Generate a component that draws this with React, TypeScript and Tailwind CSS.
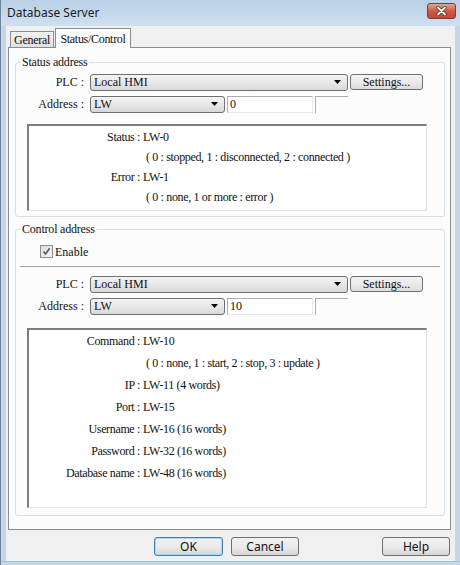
import React from "react";

const serif = { fontFamily: '"Liberation Serif", "DejaVu Serif", serif' };
const sans = { fontFamily: '"Noto Sans", "Open Sans", "Liberation Sans", sans-serif' };

function DropArrow() {
  return (
    <svg width="7" height="4" viewBox="0 0 7 4" className="shrink-0">
      <polygon points="0,0 7,0 3.5,4" fill="#000" />
    </svg>
  );
}

function Combo({ value, width }: { value: string; width: string }) {
  return (
    <div
      className={`${width} h-[17px] flex items-center justify-between pl-[3px] pr-[6px] rounded-[3px] border border-[#707070] bg-gradient-to-b from-[#f3f3f3] via-[#e8e8e8] to-[#d8d8d8] text-[12px]`}
    >
      <span>{value}</span>
      <DropArrow />
    </div>
  );
}

function Field({ value }: { value: string }) {
  return (
    <div className="w-[86px] h-[17px] flex items-center pl-[2px] ml-[2px] bg-white border border-[#abadb3] border-r-[#e3e9ef] border-b-[#e3e9ef] text-[12px]">
      {value}
    </div>
  );
}

function AddressRows({ station }: { station: string }) {
  return (
    <div className="flex flex-col gap-[4px]">
      <div className="flex items-center">
        <div className="w-[68px] text-right text-[12px] mr-[6px]">PLC :</div>
        <Combo value="Local HMI" width="w-[258px]" />
        <div className="ml-[2px] w-[73px] h-[16px] flex items-center justify-center rounded-[3px] border border-[#707070] bg-gradient-to-b from-[#f3f3f3] via-[#ebebeb] to-[#dcdcdc] text-[12px]">
          Settings...
        </div>
      </div>
      <div className="flex items-center">
        <div className="w-[68px] text-right text-[12px] mr-[6px]">Address :</div>
        <Combo value="LW" width="w-[135px]" />
        <Field value={station} />
        <div className="ml-[2px] w-[33px] h-[17px] border-l border-t border-[#abadb3]" />
      </div>
    </div>
  );
}

type Line = { label?: string; value: string };

function InfoBox({ lines, height, rowHeight, firstTop }: { lines: Line[]; height: string; rowHeight: string; firstTop: string }) {
  return (
    <div
      className={`ml-[11px] w-[400px] ${height} bg-white border-l-2 border-t-2 border-r border-b border-l-[#7d7d7d] border-t-[#7d7d7d] border-r-[#e4e4e4] border-b-[#e4e4e4] ${firstTop} text-[12px] tracking-[-0.35px]`}
    >
      {lines.map((l, i) => (
        <div key={i} className={`flex items-center ${rowHeight}`}>
          {l.label !== undefined ? (
            <>
              <div className="w-[111px] text-right whitespace-nowrap">{l.label} :</div>
              <div className="ml-[3px] whitespace-nowrap">{l.value}</div>
            </>
          ) : (
            <div className="ml-[117px] whitespace-nowrap">{l.value}</div>
          )}
        </div>
      ))}
    </div>
  );
}

function GroupBox({ title, className, children }: { title: string; className: string; children: React.ReactNode }) {
  return (
    <fieldset className={`mx-[5px] ml-[6px] border border-[#d5dfe5] rounded-[3px] ${className}`}>
      <legend className="ml-[5px] px-[1px] text-[12px] leading-[14px] tracking-[-0.2px]">{title}</legend>
      {children}
    </fieldset>
  );
}

export default function App() {
  return (
    <div className="w-[460px] h-[565px] flex flex-col bg-[#c3d6ea] border-l border-[#6f8299] text-[#111]" style={serif}>
      {/* title bar */}
      <div className="h-[26px] shrink-0 flex items-center justify-between pl-[6px] pr-[4px] bg-gradient-to-b from-[#b9d0e8] to-[#cfdff0]">
        <span className="text-[12px] text-[#1b1b1b] -mt-[1px]" style={sans}>
          Database Server
        </span>
        <div className="w-[29px] h-[16px] -mt-[4px] rounded-[3px] border border-[#7d3a32] bg-gradient-to-b from-[#e2a493] via-[#cc5a45] to-[#c04a36] flex items-center justify-center">
          <svg width="11" height="10" viewBox="0 0 11 10">
            <path d="M2 1.5 L9 8.5 M9 1.5 L2 8.5" stroke="#5b1f17" strokeWidth="3.2" strokeLinecap="round" />
            <path d="M2 1.5 L9 8.5 M9 1.5 L2 8.5" stroke="#ffffff" strokeWidth="1.8" strokeLinecap="round" />
          </svg>
        </div>
      </div>

      {/* dialog body */}
      <div className="mx-[5px] h-[535px] shrink-0 bg-[#f0f0f0] flex flex-col pt-[2px]">
        <div className="pl-[2px] pr-[4px]">
          {/* tabs */}
          <div className="h-[19px] flex items-end">
            <div className="ml-[2px] w-[44px] h-[16px] border border-b-0 border-[#898c95] bg-gradient-to-b from-[#f2f2f2] to-[#e1e1e1] text-[12px] flex items-center justify-center tracking-[-0.3px]">
              General
            </div>
            <div className="relative z-10 -mb-px ml-[1px] w-[76px] h-[20px] border border-b-0 border-[#898c95] bg-[#fcfcfc] text-[12px] flex items-start justify-center pt-[1px] tracking-[-0.3px]">
              Status/Control
            </div>
          </div>

          {/* tab page */}
          <div className="h-[483px] border border-[#898c95] bg-[#fcfcfc] pt-[7px]">
            <GroupBox title="Status address" className="pt-[4px] pb-[5px]">
              <AddressRows station="0" />
              <div className="mt-[11px]">
                <InfoBox
                  height="h-[87px]"
                  rowHeight="h-[20px]"
                  firstTop="pt-[1px]"
                  lines={[
                    { label: "Status", value: "LW-0" },
                    { value: "( 0 : stopped, 1 : disconnected, 2 : connected )" },
                    { label: "Error", value: "LW-1" },
                    { value: "( 0 : none, 1 or more : error )" },
                  ]}
                />
              </div>
            </GroupBox>

            <GroupBox title="Control address" className="mt-[5px] pb-[7px]">
              <div className="mt-[9px] ml-[24px] flex items-center h-[13px]">
                <div className="w-[13px] h-[13px] border border-[#8e8f8f] bg-gradient-to-br from-[#dcdcdc] to-[#f6f6f6] flex items-center justify-center">
                  <svg width="9" height="9" viewBox="0 0 9 9">
                    <path d="M1.5 4.5 L3.6 7 L7.6 1.2" stroke="#4a5a7a" strokeWidth="1.6" fill="none" />
                  </svg>
                </div>
                <span className="ml-[2px] text-[12px]">Enable</span>
              </div>
              <div className="mt-[8px] mx-[4px] border-t border-[#a0a0a0]" />
              <div className="mt-[8px]">
                <AddressRows station="10" />
              </div>
              <div className="mt-[13px]">
                <InfoBox
                  height="h-[180px]"
                  rowHeight="h-[22px]"
                  firstTop="pt-[0px]"
                  lines={[
                    { label: "Command", value: "LW-10" },
                    { value: "( 0 : none, 1 : start, 2 : stop, 3 : update )" },
                    { label: "IP", value: "LW-11 (4 words)" },
                    { label: "Port", value: "LW-15" },
                    { label: "Username", value: "LW-16 (16 words)" },
                    { label: "Password", value: "LW-32 (16 words)" },
                    { label: "Database name", value: "LW-48 (16 words)" },
                  ]}
                />
              </div>
            </GroupBox>
          </div>
        </div>

        {/* dialog buttons */}
        <div className="mt-[7px] flex items-center pr-[5px] text-[12px]" style={sans}>
          <button className="ml-[148px] w-[69px] h-[19px] rounded-[3px] border border-[#3c7fb1] shadow-[inset_0_0_0_1px_#a7d9f5] bg-gradient-to-b from-[#f2f2f2] via-[#ebebeb] to-[#d6d6d6] flex items-center justify-center">
            OK
          </button>
          <button className="ml-[8px] w-[68px] h-[19px] rounded-[3px] border border-[#707070] bg-gradient-to-b from-[#f2f2f2] via-[#ebebeb] to-[#d6d6d6] flex items-center justify-center">
            Cancel
          </button>
          <button className="ml-auto w-[68px] h-[19px] rounded-[3px] border border-[#707070] bg-gradient-to-b from-[#f2f2f2] via-[#ebebeb] to-[#d6d6d6] flex items-center justify-center">
            Help
          </button>
        </div>
      </div>
      <div className="flex-1 border-t border-[#9fc4cf]" />
    </div>
  );
}
